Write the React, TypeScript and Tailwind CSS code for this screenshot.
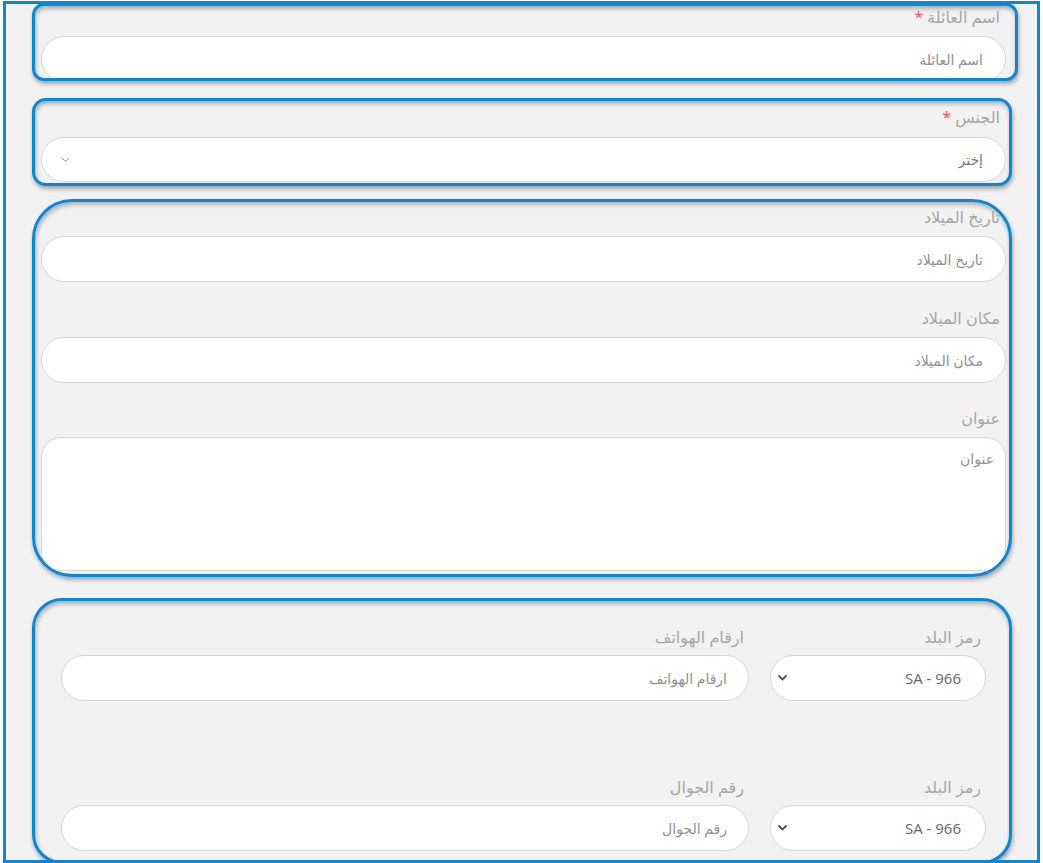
import React from 'react'

const FONT = { fontFamily: '"Open Sans", "DejaVu Sans", sans-serif' }

const CARD =
  'border-[3px] border-[#0788d8] bg-[#f2f2f2] overflow-hidden shadow-[1px_3px_4px_rgba(0,0,0,0.32),inset_1px_3px_4px_rgba(0,0,0,0.28)]'

function Chevron({ light }: { light?: boolean }) {
  return (
    <svg
      width="9"
      height="6"
      viewBox="0 0 9 6"
      fill="none"
      stroke={light ? '#9aa0aa' : '#555'}
      strokeWidth={light ? 1 : 1.8}
      strokeLinecap="round"
      strokeLinejoin="round"
    >
      <path d="M1 1l3.5 3.5L8 1" />
    </svg>
  )
}

function Label({ text, required, className = '' }: { text: string; required?: boolean; className?: string }) {
  return (
    <div className={`text-[16px] leading-[20px] text-[#a6a6a6] ${className}`}>
      {text}
      {required && <span className="text-[#ff4b5c] mr-1">*</span>}
    </div>
  )
}

function TextInput({ placeholder, className = '' }: { placeholder: string; className?: string }) {
  return (
    <div
      className={`h-[46px] rounded-full border border-[#d6d6d6] bg-white flex items-center text-[14px] text-[#8f8f8f] ${className}`}
    >
      {placeholder}
    </div>
  )
}

export default function App() {
  return (
    <div dir="ltr" className="w-[1043px] h-[863px] bg-white pt-[1px] pl-[3px] pr-[3px] overflow-hidden" style={FONT}>
      <div className="h-[862px] border-[3px] border-[#0788d8] bg-[#f2f2f2] overflow-hidden">
        <div className="h-full ml-[1px] mr-[1px] border-l border-r border-[#fbfbfb] pl-[24px]">
          {/* family name */}
          <div dir="rtl" className={`${CARD} w-[986px] h-[78px] rounded-[12px] -mt-[1px]`}>
            <Label text="اسم العائلة" required className="mr-[15px] pt-[1px]" />
            <TextInput placeholder="اسم العائلة" className="mr-[9px] w-[965px] mt-[9px] pr-[22px]" />
          </div>

          {/* gender */}
          <div dir="rtl" className={`${CARD} w-[980px] h-[88px] rounded-[14px] mt-[17px]`}>
            <Label text="الجنس" required className="mr-[9px] pt-[6px]" />
            <div className="mr-[3px] w-[965px] mt-[10px] h-[45px] rounded-full border border-[#d6d6d6] bg-white flex items-center justify-between pr-[22px] pl-[19px] text-[14px] text-[#777]">
              <span>إختر</span>
              <Chevron light />
            </div>
          </div>

          {/* birth + address */}
          <div dir="rtl" className={`${CARD} w-[980px] h-[378px] rounded-[40px] mt-[13px]`}>
            <Label text="تاريخ الميلاد" className="mr-[9px] pt-[5px]" />
            <TextInput placeholder="تاريخ الميلاد" className="mr-[3px] w-[965px] mt-[9px] pr-[22px]" />
            <Label text="مكان الميلاد" className="mr-[9px] mt-[26px]" />
            <TextInput placeholder="مكان الميلاد" className="mr-[3px] w-[965px] mt-[9px] pr-[22px]" />
            <Label text="عنوان" className="mr-[9px] mt-[25px]" />
            <textarea
              placeholder="عنوان"
              className="block mr-[3px] w-[965px] h-[134px] mt-[9px] rounded-[20px] border border-[#d6d6d6] bg-white pr-[11px] pt-[10px] text-[14px] text-[#777] placeholder:text-[#8f8f8f] outline-none"
              style={FONT}
            />
          </div>

          {/* phones */}
          <div dir="rtl" className={`${CARD} w-[980px] h-[266px] rounded-[30px] mt-[21px] pt-[26px] pr-[23px]`}>
            {[
              ['ارقام الهواتف', 'ارقام الهواتف'],
              ['رقم الجوال', 'رقم الجوال'],
            ].map(([label, ph], i) => (
              <div key={label} className={`flex gap-[21px] ${i === 1 ? 'mt-[76px]' : ''}`}>
                <div className="w-[216px]">
                  <Label text="رمز البلد" className="mr-[5px]" />
                  <div className="mt-[8px] h-[46px] rounded-full border border-[#d6d6d6] bg-white flex items-center justify-between pr-[24px] pl-[7px] text-[15px] text-[#666]">
                    <span dir="ltr">SA - 966</span>
                    <Chevron />
                  </div>
                </div>
                <div className="w-[688px]">
                  <Label text={label} className="mr-[5px]" />
                  <TextInput placeholder={ph} className="mt-[8px] pr-[21px]" />
                </div>
              </div>
            ))}
          </div>
        </div>
      </div>
    </div>
  )
}
